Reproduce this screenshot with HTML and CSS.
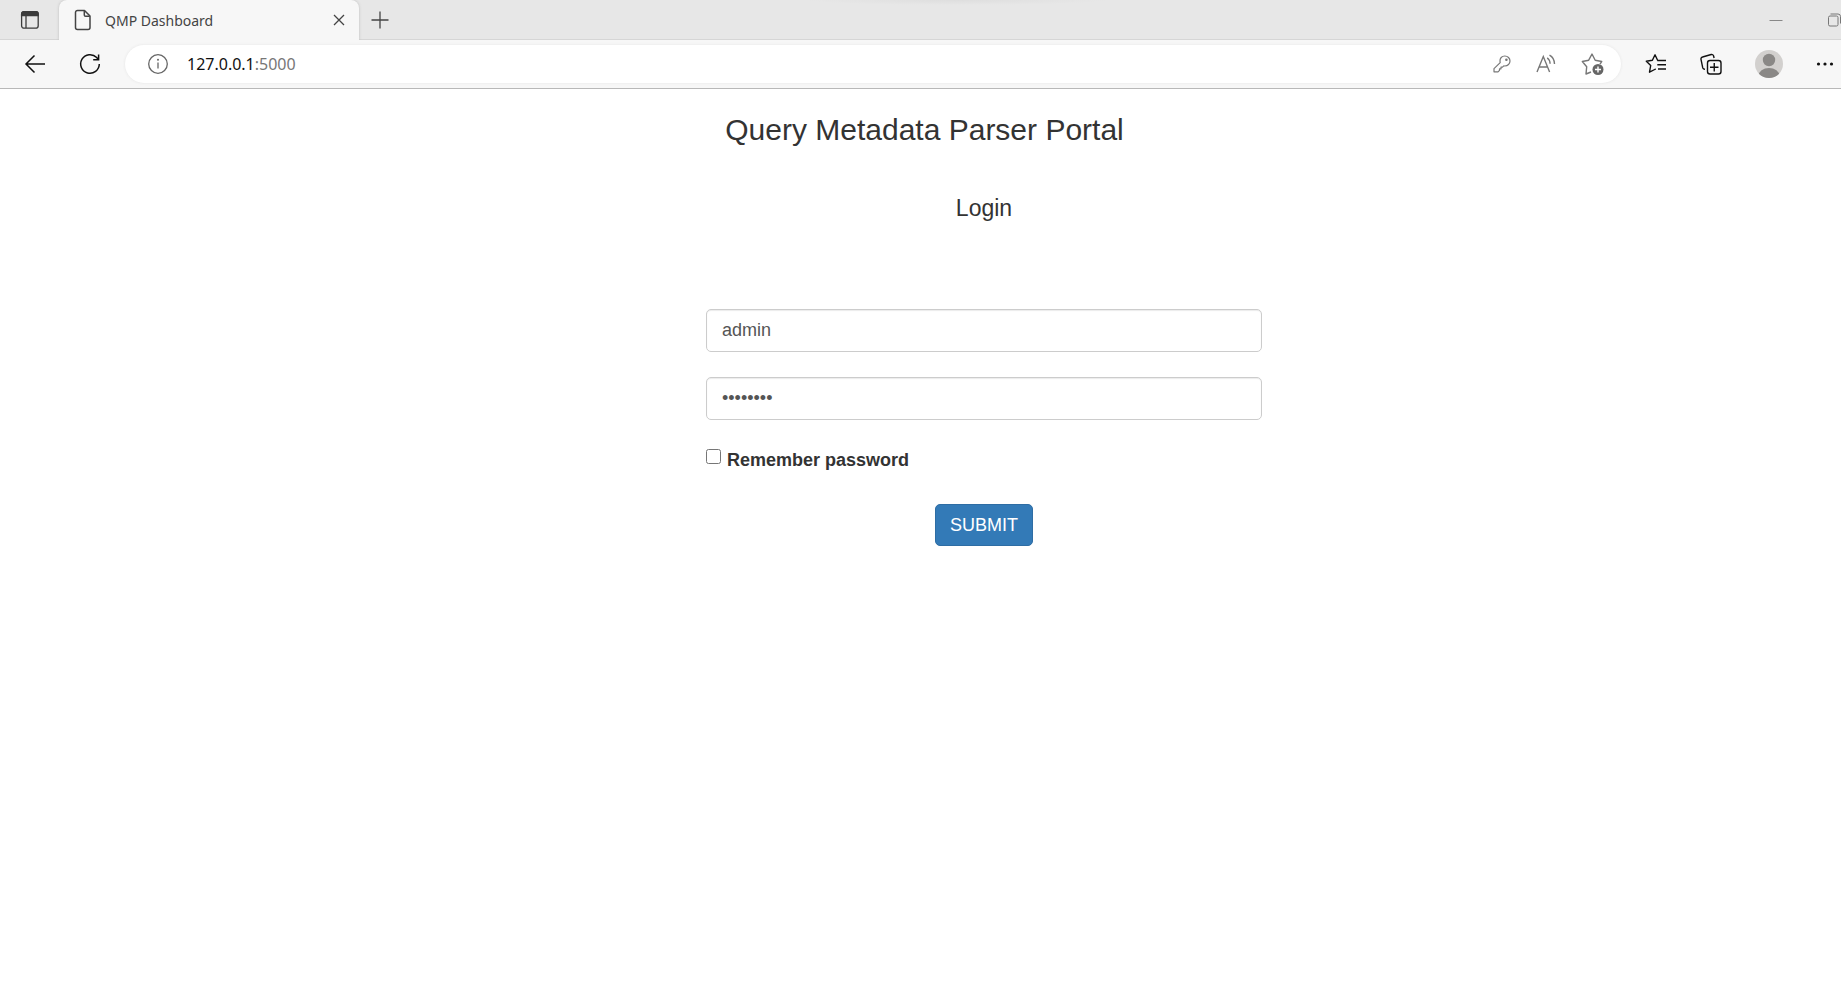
FILE: index.html
```html
<!DOCTYPE html>
<html lang="en">
<head>
<meta charset="utf-8">
<title>QMP Dashboard</title>
<link rel="stylesheet" href="styles.css">
</head>
<body>
<header class="browser">
  <div class="tabstrip">
    <button class="icon-btn tab-actions" aria-label="Tab actions">
      <svg width="20" height="20" viewBox="0 0 20 20" fill="none" stroke="#3b3b3b" stroke-width="1.3"><rect x="1.6" y="1.6" width="16.6" height="16.6" rx="2.5"/><path d="M1.6 5.6V4a2.4 2.4 0 0 1 2.4-2.4h11.8A2.4 2.4 0 0 1 18.200 4v1.600z" fill="#3b3b3b"/><path d="M6 6v12"/></svg>
    </button>
    <div class="tab">
      <svg width="18" height="22" viewBox="0 0 18 22" fill="none" stroke="#444" stroke-width="1.5" stroke-linejoin="round"><path d="M3.500 1.500h7l5.500 5.500v11.500a2 2 0 0 1-2 2H3.500a2 2 0 0 1-2-2v-15a2 2 0 0 1 2-2z"/><path d="M10.300 1.700V6a1.300 1.300 0 0 0 1.300 1.300h4.200"/></svg>
      <span class="tab-title">QMP Dashboard</span>
      <button class="icon-btn" aria-label="Close tab"><svg width="12" height="12" viewBox="0 0 12 12" stroke="#444" stroke-width="1.300"><path d="M1 1l10 10M11 1L1 11"/></svg></button>
    </div>
    <button class="icon-btn new-tab" aria-label="New tab"><svg width="18" height="18" viewBox="0 0 18 18" stroke="#444" stroke-width="1.300"><path d="M9 .500v17M.500 9h17"/></svg></button>
    <div class="window-controls">
      <button class="icon-btn" aria-label="Minimize"><svg width="14" height="14" viewBox="0 0 14 14" stroke="#888"><path d="M0.500 7.500h13"/></svg></button>
      <button class="icon-btn" aria-label="Restore"><svg width="14" height="14" viewBox="0 0 14 14" fill="none" stroke="#777"><rect x="1.500" y="3" width="9.500" height="10" rx="1.500"/><path d="M3.500 1h7.500a2.500 2.500 0 0 1 2.500 2.500v7"/></svg></button>
    </div>
  </div>
  <nav class="toolbar">
    <button class="icon-btn" aria-label="Back"><svg width="22" height="20" viewBox="0 0 22 20" fill="none" stroke="#111" stroke-width="1.500"><path d="M21 10H2M10.500 1.500L2 10l8.500 8.500"/></svg></button>
    <button class="icon-btn reload" aria-label="Refresh"><svg width="22" height="22" viewBox="0 0 22 22" fill="none" stroke="#111" stroke-width="1.500"><path d="M20.300 11A9.300 9.300 0 1 1 17.700 4.500l1.600 2"/><path d="M19.600 1.500v5.200h-5.400"/></svg></button>
    <div class="address">
      <svg width="22" height="22" viewBox="0 0 22 22" fill="none" stroke="#666" stroke-width="1.300"><circle cx="11" cy="11" r="9.300"/><path d="M11 9.500v6"/><circle cx="11" cy="6.700" r=".4" fill="#666"/></svg>
      <span class="url">127.0.0.1<span class="port">:5000</span></span>
      <div class="address-actions">
        <button class="icon-btn" aria-label="Saved passwords"><svg width="18" height="18" viewBox="0 0 18 18" fill="none" stroke="#777" stroke-width="1.200" stroke-linejoin="round"><path d="M7 6.200C6.700 3.200 8.800 1 11.800 1S17 3.300 17 6s-2.200 5-5.200 5l-1-.1-1.300 1.300H8v1.600H6.500v1.500L5 16.800H1v-3.200l6.200-6z"/><circle cx="13.400" cy="4.700" r=".7" fill="#777"/></svg></button>
        <button class="icon-btn" aria-label="Read aloud"><svg width="20" height="20" viewBox="0 0 20 20" fill="none" stroke="#777" stroke-width="1.400"><path d="M1 18L7.300 2.500l6.300 15.500M3.200 13h8.400M11.200 3.800q2.800 1.800 2.900 6M13.500 1.200q4.800 2.500 5 8.800"/></svg></button>
        <button class="icon-btn" aria-label="Add to favorites"><svg width="24" height="24" viewBox="0 0 24 24" fill="none" stroke="#777" stroke-width="1.400" stroke-linejoin="round"><path d="M10 20l-5 2 .7-7.200L1.300 9.500l6.400-1.300L11 2l3.200 6.200 6.500 1.300-1.700 2.500"/><circle cx="17" cy="17.500" r="5.500" fill="#666" stroke="none"/><path d="M17 14.500v6M14 17.500h6" stroke="#fff"/></svg></button>
      </div>
    </div>
    <button class="icon-btn" aria-label="Favorites"><svg width="22" height="22" viewBox="0 0 22 22" fill="none" stroke="#111" stroke-width="1.400" stroke-linejoin="round"><path d="M14 7.500l-1.400-.2L10 1.800 7.400 7.300l-6.100.9 4.400 4.300-1.200 6.700 5.200-2.700 1-.5M12.300 7.500h8.700M12.300 11.800h8.700M13 16h8"/></svg></button>
    <button class="icon-btn" aria-label="Collections"><svg width="22" height="22" viewBox="0 0 22 22" fill="none" stroke="#111" stroke-width="1.400"><path d="M5 16.200l-1-.1a2 2 0 0 1-1.300-1.400L1 6.400A2 2 0 0 1 2.500 4l8.700-2.500A2 2 0 0 1 13.600 3l.5 2"/><rect x="7.500" y="7.500" width="13.500" height="13.500" rx="2.500"/><path d="M14.250 10v8.500M10 14.250h8.500"/></svg></button>
    <button class="icon-btn profile" aria-label="Profile"><svg width="28" height="28" viewBox="0 0 28 28"><clipPath id="disc"><circle cx="14" cy="14" r="14"/></clipPath><g clip-path="url(#disc)"><path d="M0 0h28v28H0z" fill="#d2d0ce"/><circle cx="14" cy="10" r="6.200" fill="#8a8886"/><ellipse cx="14" cy="26" rx="10.500" ry="8" fill="#8a8886"/></g></svg></button>
    <button class="icon-btn" aria-label="Settings and more"><svg width="18" height="4" viewBox="0 0 18 4" fill="#111"><circle cx="2.500" cy="2" r="1.600"/><circle cx="9" cy="2" r="1.600"/><circle cx="15.500" cy="2" r="1.600"/></svg></button>
  </nav>
</header>
<main class="page">
  <h1 class="portal-title">Query Metadata Parser Portal</h1>
  <form class="login">
    <h2 class="login-title">Login</h2>
    <input class="field" type="text" aria-label="Username" value="admin">
    <input class="field" type="password" aria-label="Password" value="password">
    <div class="remember">
      <input class="check" type="checkbox" id="remember">
      <label for="remember">Remember password</label>
    </div>
    <button class="submit" type="button">SUBMIT</button>
  </form>
</main>
</body>
</html>
```
FILE: styles.css
```css
* { box-sizing: border-box; }
body {
  margin: 0;
  background: #fff;
  color: #333;
  font-family: "Liberation Sans", Arial, sans-serif;
  font-size: 18px;
}
svg { display: block; flex: none; }
.icon-btn { border: 0; padding: 0; background: none; flex: none; }
.browser {
  background: #f7f7f7;
  border-bottom: 1px solid #b8b8b8;
  font-family: "Noto Sans", "Open Sans", sans-serif;
}
.tabstrip {
  display: flex;
  align-items: center;
  height: 40px;
  background: radial-gradient(ellipse 150px 5px at 52% 0, #dedede, #e7e7e7);
  border-bottom: 1px solid #d6d6d6;
}
.tab-actions { padding: 0 19px 0 20px; }
.tab {
  display: flex;
  align-items: center;
  width: 300px;
  height: 40px;
  padding: 0 14px 0 15px;
  gap: 13px;
  margin-bottom: -1px;
  background: #f7f7f7;
  border-radius: 8px 8px 0 0;
  box-shadow: 0 0 3px #bbb;
  clip-path: inset(0 -4px 0 -4px);
}
.tab-title { flex: 1; color: #444; font-size: 14px; }
.new-tab { margin-left: 12px; }
.window-controls { display: flex; gap: 44px; margin-left: auto; }
.toolbar {
  display: flex;
  align-items: center;
  justify-content: space-between;
  height: 48px;
  padding: 0 7px 0 24px;
}
.reload { margin: 0 24px 0 33px; }
.address {
  display: flex;
  align-items: center;
  flex: 1;
  height: 38px;
  margin-right: 24px;
  padding: 0 16px 0 22px;
  gap: 18px;
  background: #fff;
  border-radius: 19px;
  box-shadow: 0 0 3px #e4e4e4;
}
.url { flex: 1; color: #111; font-size: 16px; }
.port { color: #777; }
.address-actions { display: flex; align-items: center; gap: 25px; }
.toolbar > .icon-btn:nth-of-type(n + 4) { margin-left: 33px; }
.page { padding: 23px 0; }
.portal-title {
  margin: 0;
  padding-left: 8px;
  font-size: 30px;
  font-weight: 400;
  line-height: 36px;
  text-align: center;
}
.login {
  display: flex;
  flex-direction: column;
  width: 30.2%;
  margin: 44px 0 0 38.35%;
}
.login-title {
  margin: 0 0 85px;
  font-size: 23px;
  font-weight: 400;
  line-height: 32px;
  text-align: center;
}
.field {
  width: 100%;
  height: 43px;
  margin-bottom: 25px;
  padding: 0 15px;
  border: 1px solid #ccc;
  border-radius: 5px;
  background: #fff;
  box-shadow: inset 0 1px 1px rgba(0, 0, 0, .08);
  color: #555;
  font: inherit;
}
.remember {
  display: flex;
  align-items: center;
  gap: 6px;
  margin: 3px 0 32px;
  font-weight: 700;
  line-height: 24px;
}
.check { width: 15px; height: 15px; margin: 0 0 7px; }
.submit {
  align-self: center;
  height: 42px;
  padding: 0 14px;
  border: 1px solid #2e6da4;
  border-radius: 5px;
  background: #337ab7;
  color: #fff;
  font: inherit;
}
```
